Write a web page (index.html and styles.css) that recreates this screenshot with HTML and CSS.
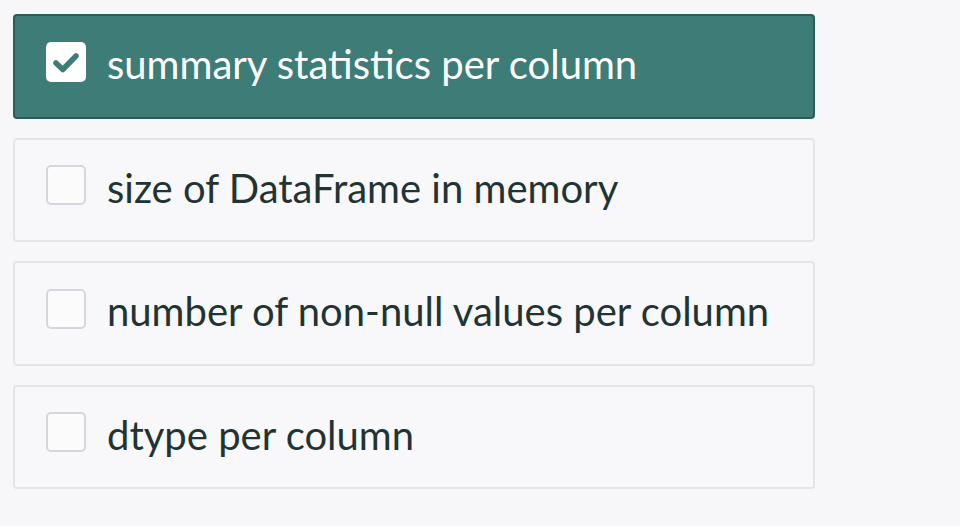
FILE: index.html
```html
<!DOCTYPE html>
<html>
<head>
<meta charset="utf-8">
<link rel="stylesheet" href="styles.css">
</head>
<body>
<div class="list">
  <label class="option checked">
    <span class="box"><svg viewBox="0 0 40 40" width="40" height="40"><path d="M10 21 L16.8 27.5 L30 14" fill="none" stroke="#3d7c77" stroke-width="5.5" stroke-linecap="round" stroke-linejoin="round"/></svg></span>
    <span class="text">summary statistics per column</span>
  </label>
  <label class="option">
    <span class="box"></span>
    <span class="text">size of DataFrame in memory</span>
  </label>
  <label class="option">
    <span class="box"></span>
    <span class="text">number of non-null values per column</span>
  </label>
  <label class="option">
    <span class="box"></span>
    <span class="text">dtype per column</span>
  </label>
</div>
</body>
</html>
```
FILE: styles.css
```css
html, body {
  margin: 0;
  padding: 0;
  background: #f7f7f9;
}
body {
  font-family: "Lato", "Open Sans", sans-serif;
}
.list {
  display: flex;
  flex-direction: column;
  gap: 19px;
  padding: 14px 0 0 13px;
  width: 802px;
}
.option {
  display: flex;
  align-items: center;
  gap: 21px;
  box-sizing: border-box;
  height: 104.5px;
  padding: 0 0 0 31px;
  border: 2px solid #e3e5e9;
  border-radius: 4px;
  background: #f8f8fa;
  color: #213433;
  font-size: 40px;
}
.option.checked {
  background: #3d7c77;
  border-color: #2e5d58;
  color: #ffffff;
}
.box {
  flex: none;
  box-sizing: border-box;
  width: 40px;
  height: 40px;
  margin-bottom: 9px;
  border: 2px solid #d2d8de;
  border-radius: 5px;
  background: #fbfbfc;
  display: flex;
}
.option.checked .box {
  border: none;
  background: #ffffff;
}
.text {
  line-height: 40px;
  margin-bottom: 4px;
}
```
